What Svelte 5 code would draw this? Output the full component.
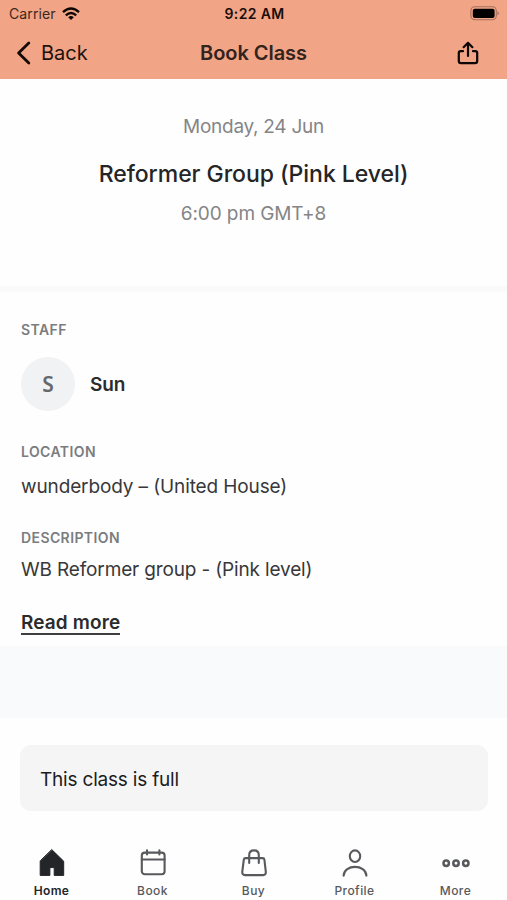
<script>
  const tabs = [
    { id: 'home', label: 'Home' },
    { id: 'book', label: 'Book' },
    { id: 'buy', label: 'Buy' },
    { id: 'profile', label: 'Profile' },
    { id: 'more', label: 'More' }
  ];
  let active = $state('home');
</script>

<div class="screen">
  <header>
    <div class="status">
      <div class="carrier">
        <span>Carrier</span>
        <svg width="18" height="14" viewBox="0 0 18 14" fill="none" stroke="#0c0604" stroke-width="2.3">
          <path d="M1 5.2Q9-2.1 17 5.2" />
          <path d="M3.8 8.3Q9 3.6 14.2 8.3" />
          <path d="M6.2 10.2Q9 8 11.8 10.2L9 13Z" fill="#0c0604" stroke="none" />
        </svg>
      </div>
      <span class="clock">9:22 AM</span>
      <svg class="battery" width="30" height="15" viewBox="0 0 30 15">
        <rect x="0.9" y="0.8" width="25.4" height="13" rx="4" fill="none" stroke="#a56f5c" stroke-width="1.1" />
        <rect x="2.8" y="2.7" width="21.8" height="9.2" rx="2" fill="#000" />
        <path d="M27.5 5.2Q30.3 7.3 27.5 9.4Z" fill="#a56f5c" />
      </svg>
    </div>
    <div class="nav">
      <button class="back">
        <svg width="15" height="24" viewBox="0 0 15 24" fill="none" stroke="#120b08" stroke-width="2.8" stroke-linecap="round" stroke-linejoin="round">
          <path d="M12.8 2L2.6 12L12.8 22" />
        </svg>
        <span>Back</span>
      </button>
      <h1>Book Class</h1>
      <button class="share" aria-label="Share">
        <svg width="22" height="24" viewBox="0 0 22 24" fill="none" stroke="#0c0604" stroke-width="2.2" stroke-linecap="round" stroke-linejoin="round">
          <path d="M6 10.2H3.6Q1.8 10.2 1.8 12V20Q1.8 22.2 4 22.2H18Q20.2 22.2 20.2 20V12Q20.2 10.2 18.4 10.2H16" />
          <path d="M11 15V2.2M6.6 6.2L11 1.8L15.4 6.2" />
        </svg>
      </button>
    </div>
  </header>

  <section class="summary">
    <p class="date">Monday, 24 Jun</p>
    <h2>Reformer Group (Pink Level)</h2>
    <p class="time">6:00 pm GMT+8</p>
  </section>

  <section class="details">
    <h3>STAFF</h3>
    <div class="staff">
      <div class="avatar">S</div>
      <span class="name">Sun</span>
    </div>
    <h3>LOCATION</h3>
    <p class="location">wunderbody – (United House)</p>
    <h3>DESCRIPTION</h3>
    <p class="description">WB Reformer group - (Pink level)</p>
    <button class="read"><span>Read more</span></button>
  </section>

  <div class="filler"></div>

  <div class="notice"><span>This class is full</span></div>

  <nav class="tabs">
    {#each tabs as tab (tab.id)}
      <button class="tab" class:active={active === tab.id} onclick={() => (active = tab.id)}>
        <svg width="30" height="30" viewBox="0 0 30 30" fill="none" stroke="currentColor" stroke-width="2.1" stroke-linecap="round" stroke-linejoin="round">
          {#if tab.id === 'home'}
            <path d="M15 2.8L26.7 14.2V28.4H17.2V20.6H12.9V28.4H3.2V14.2Z" fill="currentColor" stroke-width="1" />
          {:else if tab.id === 'book'}
            <rect x="3.8" y="5.6" width="22.8" height="21.6" rx="3" />
            <path d="M3.8 12.5H26.6M9 3.4V7.4M21.4 3.4V7.4" />
          {:else if tab.id === 'buy'}
            <path d="M6.6 11.1H23.6Q25.2 11.1 25.4 12.6L26.8 24.6Q27.1 28.1 24.2 28.1H6Q3 28.1 3.3 24.6L4.8 12.6Q5 11.1 6.6 11.1Z" />
            <path d="M10.2 16V8.2Q10.2 3.4 15 3.4T19.8 8.2V16" />
          {:else if tab.id === 'profile'}
            <ellipse cx="15" cy="9.2" rx="5.2" ry="5.8" />
            <path d="M3.6 28.6C4 17 26 17 26.4 28.6" />
          {:else}
            <circle cx="5.2" cy="16.2" r="2.7" stroke-width="2.5" />
            <circle cx="15" cy="16.2" r="2.7" stroke-width="2.5" />
            <circle cx="24.8" cy="16.2" r="2.7" stroke-width="2.5" />
          {/if}
        </svg>
        <span>{tab.label}</span>
      </button>
    {/each}
  </nav>
</div>

<style>
  :global(body) {
    margin: 0;
    background: #fff;
  }
  .screen {
    width: 507px;
    height: 900px;
    overflow: hidden;
    display: flex;
    flex-direction: column;
    background: #fefefe;
    font-family: Inter, "Liberation Sans", sans-serif;
    color: #2b2b2d;
  }
  button {
    border: 0;
    padding: 0;
    background: none;
    font: inherit;
    color: inherit;
  }
  h1, h2, h3, p {
    margin: 0;
    font-weight: 400;
    white-space: nowrap;
  }
  svg {
    display: block;
    flex: none;
  }
  header {
    height: 79px;
    flex: none;
    background: #f2a486;
  }
  .status {
    display: grid;
    grid-template-columns: 1fr auto 1fr;
    align-items: center;
    height: 27px;
    padding: 0 7px 0 9px;
  }
  .carrier {
    display: flex;
    align-items: center;
    gap: 6px;
    font-size: 14px;
    letter-spacing: 0.1px;
    color: #3b2820;
  }
  .clock {
    font-size: 14px;
    font-weight: 600;
    letter-spacing: 0.35px;
    color: #180f0b;
  }
  .battery {
    justify-self: end;
  }
  .nav {
    display: grid;
    grid-template-columns: 1fr auto 1fr;
    align-items: center;
    height: 51px;
    padding: 0 16px;
  }
  .back {
    display: flex;
    align-items: center;
    gap: 10px;
    font-size: 20px;
    color: #1d120e;
  }
  h1 {
    font-size: 20px;
    font-weight: 600;
    letter-spacing: -0.05px;
    color: #33231d;
  }
  .share {
    justify-self: end;
    margin-right: 12px;
  }
  .summary {
    height: 207px;
    flex: none;
    text-align: center;
    border-bottom: 6px solid #fafafa;
  }
  .date {
    margin-top: 35px;
    font-size: 19px;
    line-height: 26px;
    letter-spacing: -0.27px;
    color: #858587;
  }
  h2 {
    margin-top: 19px;
    font-size: 23px;
    line-height: 30px;
    font-weight: 500;
    letter-spacing: -0.04px;
    color: #252527;
  }
  .time {
    margin-top: 12px;
    font-size: 19px;
    line-height: 26px;
    letter-spacing: -0.1px;
    color: #858587;
  }
  .details {
    height: 354px;
    flex: none;
    box-sizing: border-box;
    padding: 28px 21px 0;
  }
  h3 {
    font-size: 14px;
    line-height: 20px;
    font-weight: 600;
    letter-spacing: 0.4px;
    color: #7b7c7f;
  }
  .staff {
    display: flex;
    align-items: center;
    gap: 15px;
    margin: 17px 0 31px;
  }
  .avatar {
    width: 54px;
    height: 54px;
    border-radius: 50%;
    display: flex;
    align-items: center;
    justify-content: center;
    background: #f0f2f4;
    color: #66686c;
    font: 600 21px "Noto Sans", sans-serif;
  }
  .name {
    font-size: 19px;
    font-weight: 600;
    letter-spacing: -0.1px;
  }
  .location {
    margin: 12px 0 28px;
    font-size: 19px;
    line-height: 26px;
    letter-spacing: -0.12px;
    color: #38383a;
  }
  .description {
    margin: 9px 0 29px;
    font-size: 19px;
    line-height: 26px;
    letter-spacing: -0.15px;
    color: #38383a;
  }
  .read {
    display: block;
    border-bottom: 2px solid #3f3f41;
    font-size: 19px;
    line-height: 21px;
    font-weight: 600;
    letter-spacing: 0.13px;
  }
  .filler {
    height: 72px;
    flex: none;
    background: #f8fafc;
  }
  .notice {
    display: flex;
    align-items: center;
    height: 66px;
    flex: none;
    box-sizing: border-box;
    margin: 27px 19px 0 20px;
    padding: 3px 0 0 20px;
    border-radius: 11px;
    background: #f5f5f5;
    font-size: 19px;
    letter-spacing: -0.2px;
    color: #1c1c1e;
  }
  .tabs {
    display: grid;
    grid-template-columns: repeat(5, 101px);
    margin-top: 36px;
    padding-left: 1px;
  }
  .tab {
    display: flex;
    flex-direction: column;
    align-items: center;
    gap: 6px;
    font-size: 12px;
    line-height: 16px;
    font-weight: 500;
    letter-spacing: 0.45px;
    color: #58595c;
  }
  .tab.active {
    color: #232528;
    font-weight: 600;
    letter-spacing: 0.3px;
  }
</style>
